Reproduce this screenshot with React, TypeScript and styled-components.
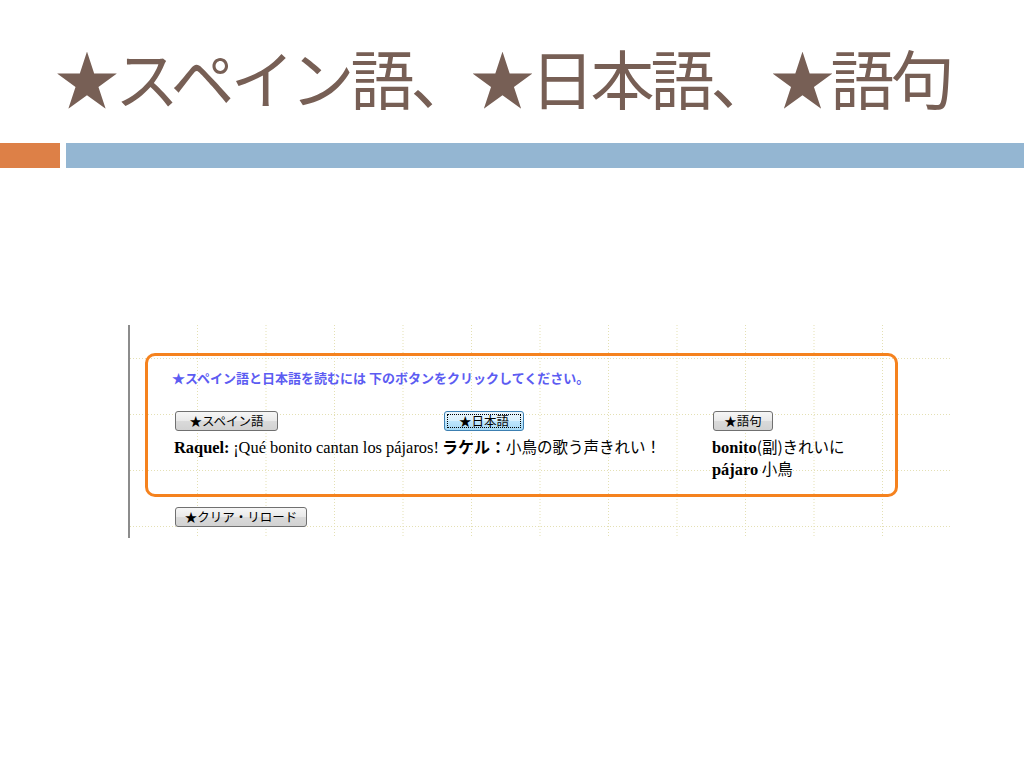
import React from 'react';
import styled, {createGlobalStyle, css} from 'styled-components';

const Global = createGlobalStyle`
  html, body {
    margin: 0;
    padding: 0;
    background: #ffffff;
  }
  body {
    font-family: "Noto Sans CJK JP", "Noto Sans", sans-serif;
  }
`;

const Slide = styled.div`
  width: 1024px;
  height: 768px;
  overflow: hidden;
  background: #ffffff;
`;

const Title = styled.h1`
  margin: 0;
  padding: 44px 0 0 55px;
  height: 143px;
  box-sizing: border-box;
  font-family: "Noto Sans CJK JP", sans-serif;
  font-weight: 400;
  font-size: 64px;
  line-height: 64px;
  letter-spacing: -4px;
  color: #775f55;
  white-space: nowrap;
`;

const Bars = styled.div`
  display: flex;
  gap: 6px;
  height: 25px;
`;

const Bar = styled.div<{$color: string; $width?: number}>`
  background: ${p => p.$color};
  ${p => (p.$width ? css`width: ${p.$width}px;` : css`flex: 1;`)}
`;

// dotted guide grid of the captured page
const Shot = styled.div`
  margin: 157px 0 0 128px;
  width: 822px;
  height: 213px;
  box-sizing: border-box;
  border-left: 2px solid #8c8c8c;
  padding: 28px 0 0 15px;
  background-color: #ffffff;
  background-image:
    conic-gradient(from 0deg at 1px 1px, transparent 0 75%, #e4e0b4 75% 100%),
    conic-gradient(from 0deg at 1px 1px, transparent 0 75%, #e4e0b4 75% 100%);
  background-size: 68.5px 3px, 3px 56px;
  background-position: 67px 0, 0 33px;
`;

const Frame = styled.div`
  width: 753px;
  height: 144px;
  box-sizing: border-box;
  border: 3px solid #f5821e;
  border-radius: 10px;
  padding: 12px 0 0 24px;
`;

const Intro = styled.div`
  font-family: "Noto Sans CJK JP", sans-serif;
  font-weight: 700;
  font-size: 13px;
  line-height: 20px;
  color: #5c5cf2;
  white-space: nowrap;
`;

const Columns = styled.div`
  display: grid;
  grid-template-columns: 268px 270px 1fr;
  margin-top: 23px;
  margin-left: 2px;
`;

const Column = styled.div`
  display: flex;
  flex-direction: column;
  align-items: flex-start;
`;

const Button = styled.button<{$width: number; $focused?: boolean; $shift?: number}>`
  position: relative;
  width: ${p => p.$width}px;
  height: 20px;
  margin-left: ${p => p.$shift ?? 0}px;
  padding: 0;
  font-family: "Noto Sans CJK JP", sans-serif;
  font-size: 12.5px;
  line-height: 18px;
  color: #000;
  border: 1px solid #707070;
  border-radius: 3px;
  background: linear-gradient(#f6f6f6 0%, #e9e9e9 50%, #dadada 51%, #d2d2d2 100%);
  ${p =>
    p.$focused &&
    css`
      border-color: #3c7fb1;
      background: linear-gradient(#eaf6fd 0%, #d9f0fc 50%, #bee6fd 51%, #a7d9f5 100%);
      &::after {
        content: '';
        position: absolute;
        inset: 2px;
        border: 1px dotted #000;
      }
    `}
`;

const Line = styled.div`
  margin-top: 5px;
  font-size: 16px;
  line-height: 21px;
  color: #000;
  white-space: nowrap;
  & + & {
    margin-top: 0;
  }
`;

const Serif = styled.span<{$bold?: boolean}>`
  font-family: "Liberation Serif", "Times New Roman", serif;
  font-size: 16.4px;
  font-weight: ${p => (p.$bold ? 700 : 400)};
`;

const Jp = styled.span<{$bold?: boolean; $size?: number}>`
  font-family: "Noto Sans CJK JP", sans-serif;
  font-weight: ${p => (p.$bold ? 700 : 400)};
  font-size: ${p => p.$size ?? 15.5}px;
`;

const Bottom = styled.div`
  margin: 6px 0 0 30px;
`;

export default function App() {
  return (
    <Slide>
      <Global />
      <Title>★スペイン語、★日本語、★語句</Title>
      <Bars>
        <Bar $color="#dd8047" $width={60} />
        <Bar $color="#94b6d2" />
      </Bars>
      <Shot>
        <Frame>
          <Intro>★スペイン語と日本語を読むには 下のボタンをクリックしてください。</Intro>
          <Columns>
            <Column>
              <Button $width={103} $shift={1}>★スペイン語</Button>
              <Line>
                <Serif $bold>Raquel:</Serif> <Serif>¡Qué bonito cantan los pájaros!</Serif>
              </Line>
            </Column>
            <Column>
              <Button $width={80} $shift={2} $focused>★日本語</Button>
              <Line>
                <Jp $bold $size={16}>ラケル：</Jp>
                <Jp>小鳥の歌う声きれい！</Jp>
              </Line>
            </Column>
            <Column>
              <Button $width={60} $shift={1}>★語句</Button>
              <Line>
                <Serif $bold>bonito</Serif>
                <Jp>(副)きれいに</Jp>
              </Line>
              <Line>
                <Serif $bold>pájaro</Serif> <Jp>小鳥</Jp>
              </Line>
            </Column>
          </Columns>
        </Frame>
        <Bottom>
          <Button $width={132}>★クリア・リロード</Button>
        </Bottom>
      </Shot>
    </Slide>
  );
}
